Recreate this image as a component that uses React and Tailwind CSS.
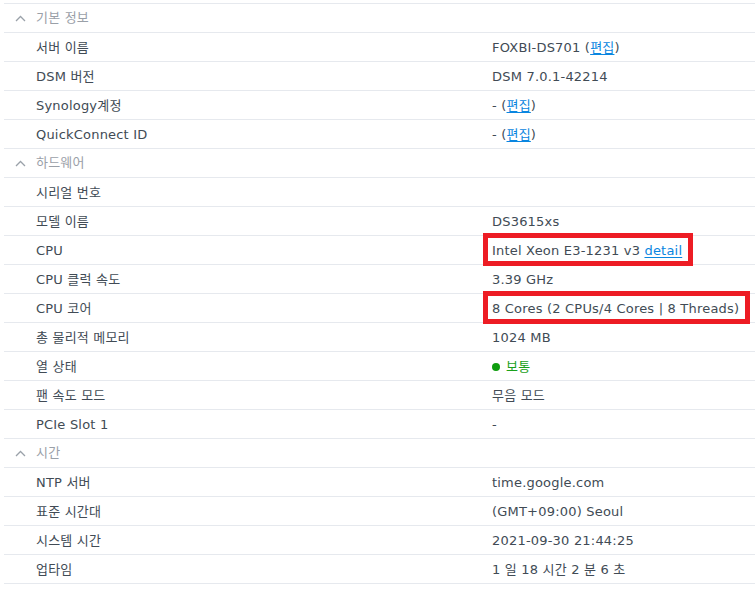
import React from "react";

const FONT = { fontFamily: '"DejaVu Sans", "Noto Sans CJK KR", sans-serif' };

function Chevron() {
  return (
    <svg width="11" height="7" viewBox="0 0 11 7" className="shrink-0">
      <path d="M1 6 L5.5 1.5 L10 6" fill="none" stroke="#9aa1a9" strokeWidth="1.3" />
    </svg>
  );
}

function Header({ title }) {
  return (
    <div className="h-[29px] border-b border-[#e6e9ee] flex items-center">
      <div className="w-[32px] flex justify-end pr-[10px]">
        <Chevron />
      </div>
      <span className="text-[#9aa0a8]">{title}</span>
    </div>
  );
}

function Edit() {
  return (
    <>
      {" ("}
      <span className="text-[#0a86e0] underline underline-offset-2">편집</span>
      {")"}
    </>
  );
}

function Row({ label, value, boxed }) {
  return (
    <div className="h-[29px] border-b border-[#e6e9ee] flex items-center text-[#414b55]">
      <div className="pl-[32px] w-[488px] shrink-0 pt-[1px]">{label}</div>
      <div className="relative self-stretch flex items-center pt-[1px]">
        {boxed && (
          <span className="absolute -left-[9px] -right-[11px] -top-[3px] -bottom-[2px] border-[5px] border-[#ed1c24]" />
        )}
        <span className="relative">{value}</span>
      </div>
    </div>
  );
}

export default function App() {
  return (
    <div className="w-[755px] h-[595px] bg-white overflow-hidden text-[13px] tracking-[0.2px]" style={FONT}>
      <div className="ml-[4px] mt-[3px] border-t border-[#e6e9ee]">
        <Header title="기본 정보" />
        <Row label="서버 이름" value={<>FOXBI-DS701<Edit /></>} />
        <Row label="DSM 버전" value="DSM 7.0.1-42214" />
        <Row label="Synology계정" value={<>-<Edit /></>} />
        <Row label="QuickConnect ID" value={<>-<Edit /></>} />
        <Header title="하드웨어" />
        <Row label="시리얼 번호" value="" />
        <Row label="모델 이름" value="DS3615xs" />
        <Row
          label="CPU"
          boxed
          value={
            <>
              Intel Xeon E3-1231 v3{" "}
              <span className="text-[#0a86e0] underline underline-offset-2">detail</span>
            </>
          }
        />
        <Row label="CPU 클럭 속도" value="3.39 GHz" />
        <Row label="CPU 코어" boxed value="8 Cores (2 CPUs/4 Cores | 8 Threads)" />
        <Row label="총 물리적 메모리" value="1024 MB" />
        <Row
          label="열 상태"
          value={
            <span className="flex items-center gap-[6px] text-[#1aa11a]">
              <span className="w-[8px] h-[8px] rounded-full bg-[#0f9d0f]" />
              보통
            </span>
          }
        />
        <Row label="팬 속도 모드" value="무음 모드" />
        <Row label="PCIe Slot 1" value="-" />
        <Header title="시간" />
        <Row label="NTP 서버" value="time.google.com" />
        <Row label="표준 시간대" value="(GMT+09:00) Seoul" />
        <Row label="시스템 시간" value="2021-09-30 21:44:25" />
        <Row label="업타임" value="1 일 18 시간 2 분 6 초" />
      </div>
    </div>
  );
}
